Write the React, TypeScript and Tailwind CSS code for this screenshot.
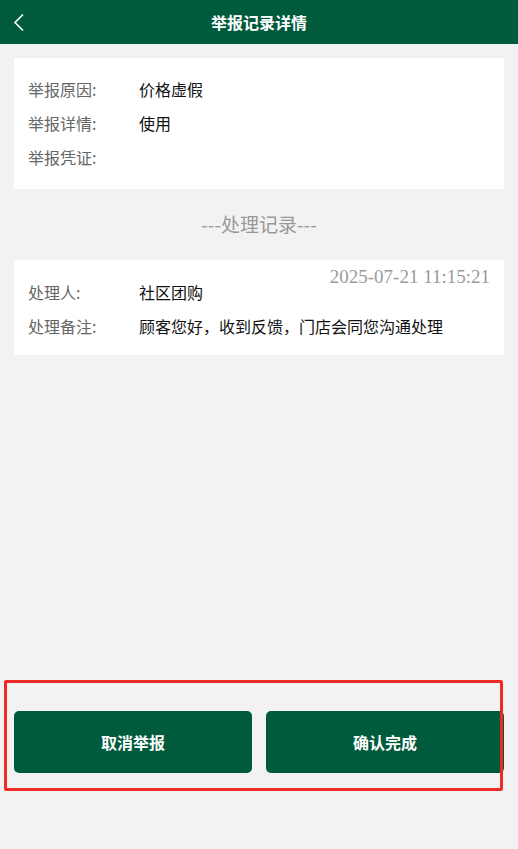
import React from "react";

const font = { fontFamily: '"Microsoft YaHei","Noto Sans CJK SC","Noto Sans",sans-serif' };

export default function App() {
  return (
    <div className="w-[518px] h-[849px] bg-[#f2f2f2] relative overflow-hidden" style={font}>
      <div className="h-[44px] bg-[#005a3c] flex items-center justify-center relative">
        <svg className="absolute left-[12px] top-[13px]" width="14" height="19" viewBox="0 0 14 19">
          <path d="M11 1.5 L3 9.5 L11 17.5" fill="none" stroke="#ffffff" strokeWidth="1.6" />
        </svg>
        <span className="text-white text-[16px] font-bold">举报记录详情</span>
      </div>

      <div className="mx-[14px] mt-[14px] bg-white pt-[20px] pb-[21px] px-[14px] flex flex-col gap-[12px]">
        <div className="flex items-center h-[22px] text-[16px]">
          <span className="w-[111px] text-[#666]">举报原因:</span>
          <span className="text-[#111]">价格虚假</span>
        </div>
        <div className="flex items-center h-[22px] text-[16px]">
          <span className="w-[111px] text-[#666]">举报详情:</span>
          <span className="text-[#111]">使用</span>
        </div>
        <div className="flex items-center h-[22px] text-[16px]">
          <span className="w-[111px] text-[#666]">举报凭证:</span>
        </div>
      </div>

      <div className="h-[71px] flex items-center justify-center text-[19px] text-[#999]">---处理记录---</div>

      <div className="mx-[14px] bg-white relative pt-[21px] pb-[18px] px-[14px] flex flex-col gap-[12px]">
        <span
          className="absolute right-[14px] top-[4px] text-[19px] leading-[26px] text-[#9a9a9a]"
          style={{ fontFamily: '"Liberation Serif",serif' }}
        >
          2025-07-21 11:15:21
        </span>
        <div className="flex items-center h-[22px] text-[16px]">
          <span className="w-[111px] text-[#666]">处理人:</span>
          <span className="text-[#111]">社区团购</span>
        </div>
        <div className="flex items-center h-[22px] text-[16px]">
          <span className="w-[111px] text-[#666]">处理备注:</span>
          <span className="text-[#111]">顾客您好，收到反馈，门店会同您沟通处理</span>
        </div>
      </div>

      <div className="absolute left-0 top-[711px] w-full px-[14px] flex gap-[14px]">
        <button className="flex-1 h-[62px] rounded-[5px] bg-[#005a3c] text-white text-[16px] font-bold">取消举报</button>
        <button className="flex-1 h-[62px] rounded-[5px] bg-[#005a3c] text-white text-[16px] font-bold">确认完成</button>
      </div>
      <div className="absolute left-[4px] top-[680px] w-[499px] h-[111px] border-[3px] border-[#ee2a24] rounded-[2px] pointer-events-none" />
    </div>
  );
}
